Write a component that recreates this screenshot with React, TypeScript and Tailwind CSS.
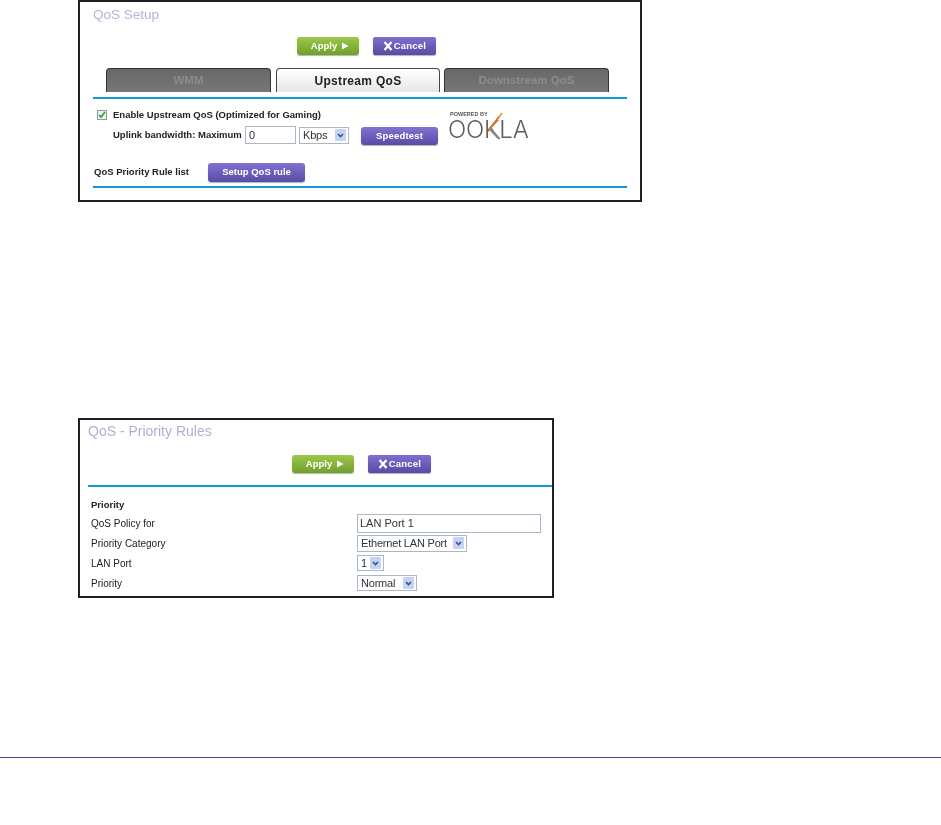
import React from 'react';

const ACCENT = 'h-[2px] bg-[#0f9ad4]';

const GreenButton = () => (
  <button className="w-[62px] h-[18px] rounded-[3px] bg-gradient-to-b from-[#9cc84a] to-[#6fa02c] text-white text-[9.5px] font-bold flex items-center justify-center gap-[4px] pl-[4px] shadow-[0_1px_1px_rgba(0,0,0,0.3)]">
    Apply
    <svg width="8" height="8" viewBox="0 0 8 8"><path d="M1 0.5l6.5 3.5-6.5 3.5z" fill="#fff" /></svg>
  </button>
);

const CancelButton = () => (
  <button className="w-[63px] h-[18px] rounded-[2px] bg-gradient-to-b from-[#7f70d0] to-[#5a4aa6] text-white text-[9.5px] font-bold tracking-[0.2px] flex items-center justify-center gap-[1px] shadow-[0_1px_1px_rgba(0,0,0,0.3)]">
    <svg width="10" height="10" viewBox="0 0 10 10"><path d="M1.5 1l7 8M8.5 1l-7 8" stroke="#fff" strokeWidth="2.2" /></svg>
    Cancel
  </button>
);

const PurpleButton = ({ label, className }: { label: string; className: string }) => (
  <button className={`rounded-[3px] bg-gradient-to-b from-[#8173d2] to-[#5a4aa6] text-white text-[9.5px] font-bold flex items-center justify-center shadow-[0_1px_1px_rgba(0,0,0,0.3)] ${className}`}>
    {label}
  </button>
);

const FakeSelect = ({ value, className }: { value: string; className: string }) => (
  <div className={`border border-[#a9b7c9] bg-white flex items-center justify-between pl-[3px] pr-[2px] text-[11px] tracking-[-0.2px] text-[#333] ${className}`}>
    <span>{value}</span>
    <span className="w-[11px] h-[12px] rounded-[1px] bg-[#c3d3f3] flex items-center justify-center">
      <svg width="7" height="5" viewBox="0 0 7 5"><path d="M1 1l2.5 2.5L6 1" stroke="#35508f" strokeWidth="1.6" fill="none" /></svg>
    </span>
  </div>
);

const OoklaLogo = () => (
  <div className="relative w-[82px] h-[28px] ml-[10px] mt-[-15px] self-start">
    <div className="pl-[2px] h-[9px] text-[5.5px] font-bold leading-[7px] text-[#555] whitespace-nowrap">POWERED BY</div>
    <div className="text-[24px] leading-[20px] font-light text-[#5c5f62] tracking-[-0.2px] whitespace-nowrap [font-family:Inter,sans-serif]">OOKLA</div>
    <svg className="absolute left-[36px] top-[1px]" width="24" height="28" viewBox="0 0 24 28">
      <path d="M18 1L5 18" stroke="#e8a020" strokeWidth="1.8" fill="none" />
      <path d="M15 5L5 17l10 10" stroke="#e2672a" strokeWidth="1.4" fill="none" />
      <path d="M7 17l9 10" stroke="#4a9ccb" strokeWidth="1.4" fill="none" />
    </svg>
  </div>
);

const Tab = ({ label, active }: { label: string; active?: boolean }) =>
  active ? (
    <div className="w-[164px] h-[24px] ml-[1px] border border-b-0 border-[#444] rounded-t-[4px] bg-gradient-to-b from-white to-[#e6e6e6] flex items-center justify-center text-[12px] font-bold tracking-[0.3px] text-[#222]">
      {label}
    </div>
  ) : (
    <div className="w-[165px] h-[24px] border border-b-0 border-[#333] rounded-t-[4px] bg-gradient-to-b from-[#686868] to-[#767776] flex items-center justify-center text-[11.5px] font-bold text-[#8c8c8c]">
      {label}
    </div>
  );

const Row = ({ label, children }: { label: string; children?: React.ReactNode }) => (
  <div className="h-[20px] flex items-center">
    <div className="w-[267px] pl-[1px] pt-[1px] text-[10px] text-[#222]">{label}</div>
    {children}
  </div>
);

export default function App() {
  return (
    <div className="w-[941px] h-[825px] bg-white pl-[78px] overflow-hidden [font-family:'Liberation_Sans',Arial,sans-serif]">
      {/* QoS Setup panel */}
      <div className="w-[564px] h-[202px] border-2 border-[#231f20] px-[13px] blur-[0.5px]">
        <div className="h-[20px] pt-[5px] text-[13.5px] leading-[15px] text-[#b6b4d8]">QoS Setup</div>
        <div className="mt-[15px] ml-[204px] flex gap-[14px]">
          <GreenButton />
          <CancelButton />
        </div>
        <div className="mt-[13px] ml-[13px] flex gap-[4px]">
          <Tab label="WMM" />
          <Tab label="Upstream QoS" active />
          <Tab label="Downstream QoS" />
        </div>
        <div className={`mt-[5px] ${ACCENT}`} />
        <div className="mt-[10px] ml-[4px] flex items-center gap-[6px] h-[12px]">
          <div className="w-[10px] h-[10px] border border-[#8d9aa8] bg-[#eef3ee] flex items-center justify-center">
            <svg width="8" height="8" viewBox="0 0 8 8"><path d="M1 4l2 2 4-5" stroke="#2f9a3a" strokeWidth="1.6" fill="none" /></svg>
          </div>
          <span className="text-[9.5px] font-bold text-[#222]">Enable Upstream QoS (Optimized for Gaming)</span>
        </div>
        <div className="mt-[5px] ml-[20px] flex items-center h-[18px]">
          <span className="w-[132px] text-[9.5px] font-bold text-[#222] whitespace-nowrap">Uplink bandwidth: Maximum</span>
          <div className="w-[51px] h-[18px] border border-[#a9b7c9] pl-[3px] text-[11px] leading-[16px] text-[#333]">0</div>
          <FakeSelect value="Kbps" className="ml-[3px] w-[50px] h-[17px]" />
          <PurpleButton label="Speedtest" className="ml-[12px] mt-[2px] w-[77px] h-[18px] tracking-[0.2px]" />
          <OoklaLogo />
        </div>
        <div className="mt-[19px] flex items-center h-[19px]">
          <span className="w-[115px] pl-[1px] text-[9.5px] font-bold text-[#222]">QoS Priority Rule list</span>
          <PurpleButton label="Setup QoS rule" className="w-[97px] h-[19px]" />
        </div>
        <div className={`mt-[4px] ${ACCENT}`} />
      </div>

      {/* QoS Priority Rules panel */}
      <div className="mt-[216px] w-[476px] h-[180px] border-2 border-[#231f20] pl-[8px] blur-[0.5px]">
        <div className="h-[20px] pt-[3px] text-[14px] leading-[16px] text-[#b0aed4]">QoS - Priority Rules</div>
        <div className="mt-[15px] ml-[204px] flex gap-[14px]">
          <GreenButton />
          <CancelButton />
        </div>
        <div className={`mt-[12px] ${ACCENT}`} />
        <div className="mt-[9px] pl-[2px] flex flex-col">
          <div className="h-[17px] flex items-center pt-[1px] pl-[1px] text-[9.5px] font-bold text-[#222]">Priority</div>
          <Row label="QoS Policy for">
            <div className="w-[184px] h-[19px] border border-[#a9b7c9] pl-[2px] text-[11px] leading-[17px] text-[#333]">LAN Port 1</div>
          </Row>
          <Row label="Priority Category">
            <FakeSelect value="Ethernet LAN Port" className="w-[110px] h-[17px]" />
          </Row>
          <Row label="LAN Port">
            <FakeSelect value="1" className="w-[27px] h-[16px]" />
          </Row>
          <Row label="Priority">
            <FakeSelect value="Normal" className="w-[60px] h-[16px]" />
          </Row>
        </div>
      </div>

      {/* page footer rule */}
      <div className="mt-[159px] ml-[-78px] w-[941px] h-[1px] bg-[#5b3a8c]" />
    </div>
  );
}
